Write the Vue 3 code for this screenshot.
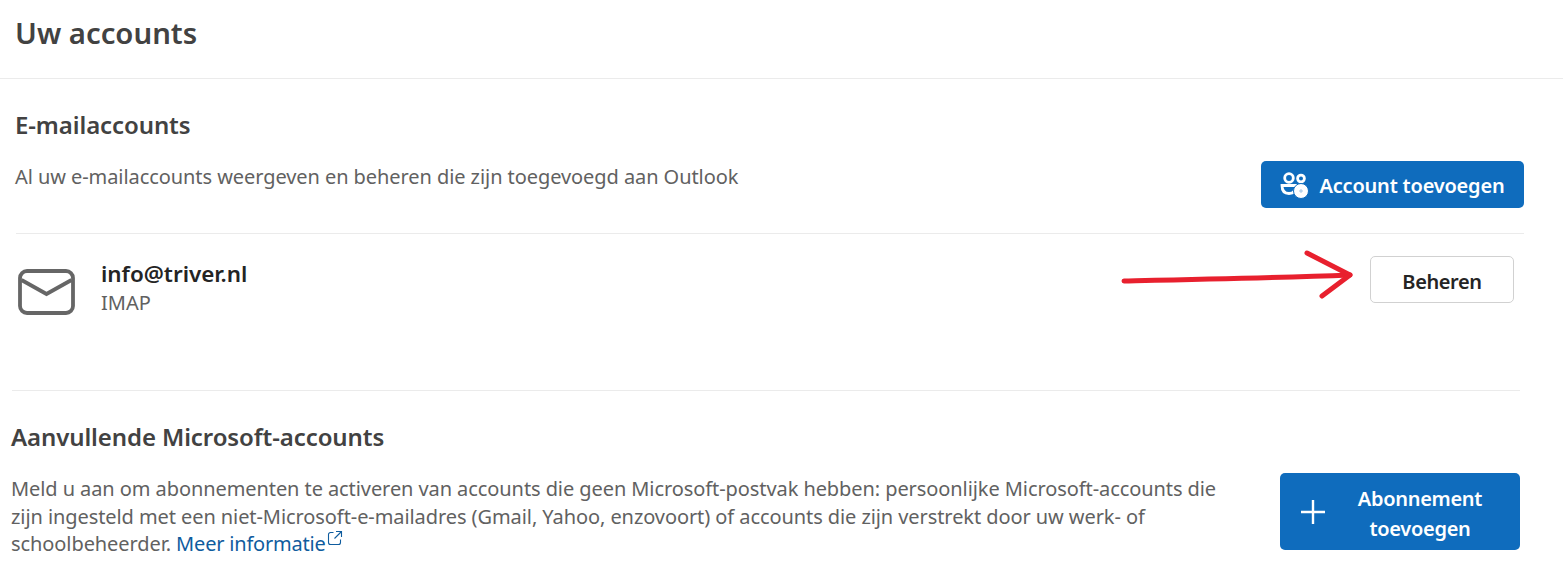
<template>
  <div class="page">
    <header class="head"><h1>Uw accounts</h1></header>

    <section class="mail">
      <h2>E-mailaccounts</h2>
      <div class="intro">
        <p>Al uw e-mailaccounts weergeven en beheren die zijn toegevoegd aan Outlook</p>
        <button class="primary add">
          <svg width="30" height="28" viewBox="0 0 30 28" fill="none" stroke="#fff" stroke-width="2.800">
            <circle cx="9" cy="7" r="4.300" />
            <circle cx="21" cy="7.500" r="3.400" />
            <path d="M2 14.500h14c0 5-2.500 8-7 8S2 19.500 2 14.500Z" />
            <circle cx="21" cy="20" r="7.500" fill="#fff" stroke="#0f6cbd" stroke-width="1" />
            <path d="M21 18v4M19 20h4" stroke="#8fb9de" stroke-width="0.800" />
          </svg>
          <span>Account toevoegen</span>
        </button>
      </div>
      <div class="row">
        <svg class="env" width="57" height="46" viewBox="0 0 57 46" fill="none" stroke="#666" stroke-width="3.800">
          <rect x="2" y="2" width="53" height="42" rx="7" />
          <path d="M3.500 11 28.500 25 53.500 11" />
        </svg>
        <div class="who">
          <div class="addr">info@triver.nl</div>
          <div class="kind">IMAP</div>
        </div>
        <button class="manage">Beheren</button>
        <svg class="arrow" width="244" height="60" viewBox="0 0 244 60" fill="none" stroke="#e8202e" stroke-linecap="round" stroke-linejoin="round">
          <path d="M3 32C50 31 150 29 229 26" stroke-width="5" />
          <path d="M186 4 229 26 201 47" stroke-width="5" />
        </svg>
      </div>
    </section>

    <section class="extra">
      <h2>Aanvullende Microsoft-accounts</h2>
      <div class="body">
        <p>
          Meld u aan om abonnementen te activeren van accounts die geen Microsoft-postvak hebben: persoonlijke Microsoft-accounts die zijn ingesteld met een niet-Microsoft-e-mailadres (Gmail, Yahoo, enzovoort) of accounts die zijn verstrekt door uw werk- of schoolbeheerder.
          <a>Meer informatie<svg class="ext" width="16" height="16" viewBox="0 0 16 16" fill="none" stroke="#0f5c9e" stroke-width="1.100"><path d="M6.500 2.500H3.500a2 2 0 0 0-2 2v8a2 2 0 0 0 2 2h8a2 2 0 0 0 2-2v-3M9 1.500h5.500V7M14.500 1.500 7.500 8.500" /></svg></a>
        </p>
        <button class="primary sub">
          <svg width="26" height="26" viewBox="0 0 26 26" stroke="#fff" stroke-width="2.400"><path d="M13 1v24M1 13h24" /></svg>
          <span>Abonnement toevoegen</span>
        </button>
      </div>
    </section>
  </div>
</template>

<script setup>
</script>

<style>
html, body { background: #fff; }
</style>

<style scoped>
.page {
  width: 1563px;
  height: 573px;
  overflow: hidden;
  font-family: "Noto Sans", "Open Sans", sans-serif;
  color: #424242;
  background: #fff;
}
h1, h2, p { margin: 0; }
.head {
  height: 79px;
  box-sizing: border-box;
  padding: 12px 0 0 15px;
  border-bottom: 1px solid #ebebeb;
}
h1 { font-size: 29.300px; line-height: 42px; font-weight: 600; color: #424242; }
h2 { font-size: 24px; line-height: 32px; font-weight: 600; color: #424242; letter-spacing: -0.100px; margin-left: -1px; }
button { font-family: inherit; cursor: pointer; }
.primary {
  background: #0f6cbd;
  color: #fff;
  border: none;
  border-radius: 5px;
  font-weight: 600;
  font-size: 20px;
  display: flex;
  align-items: center;
}
.mail { margin: 0 39px 0 16px; height: 311px; position: relative; }
.mail h2 { padding-top: 30px; }
.intro {
  display: flex;
  justify-content: space-between;
  align-items: flex-start;
  height: 113px;
  margin-top: 19px;
  box-sizing: border-box;
}
.intro p { font-size: 20px; line-height: 28px; color: #616161; margin: 3px 0 0 -1px; letter-spacing: -0.070px; }
.add { width: 263px; height: 47px; justify-content: center; gap: 9px; padding: 0; margin-top: 1px; letter-spacing: -0.200px; white-space: nowrap; }
.add span { padding-top: 2px; }
.row { height: 156px; border-top: 1px solid #ebebeb; margin-top: -40px; display: flex; align-items: flex-start; position: relative; }
.env { margin: 35px 0 0 2px; flex: none; }
.who { margin: 23px 0 0 26px; }
.addr { font-size: 22.400px; line-height: 34px; font-weight: 600; color: #242424; }
.kind { font-size: 20px; line-height: 26px; color: #616161; margin-top: -1px; }
.manage {
  margin: 22px 10px 0 auto;
  width: 144px;
  height: 47px;
  padding: 3px 0 0;
  background: #fff;
  border: 1px solid #d1d1d1;
  border-radius: 5px;
  font-size: 20px;
  font-weight: 600;
  color: #242424;
  letter-spacing: -0.400px;
}
.arrow { position: absolute; left: 1105px; top: 15px; }
.extra { margin: 0 43px 0 12px; border-top: 1px solid #ebebeb; }
.extra h2 { padding-top: 30px; }
.body { display: flex; justify-content: space-between; align-items: flex-start; margin-top: 20px; }
.body p { width: 1220px; font-size: 20px; line-height: 27.500px; color: #616161; margin: 2px 0 0 -1px; letter-spacing: -0.080px; }
a { color: #0f5c9e; letter-spacing: -0.200px; }
.ext { vertical-align: 5px; margin-left: 1px; }
.sub { width: 240px; height: 77px; padding: 0 0 0 20px; gap: 19px; flex: none; text-align: center; line-height: 30px; letter-spacing: -0.300px; }
.sub span { width: 150px; padding-top: 5px; }
.sub svg { flex: none; }
</style>
